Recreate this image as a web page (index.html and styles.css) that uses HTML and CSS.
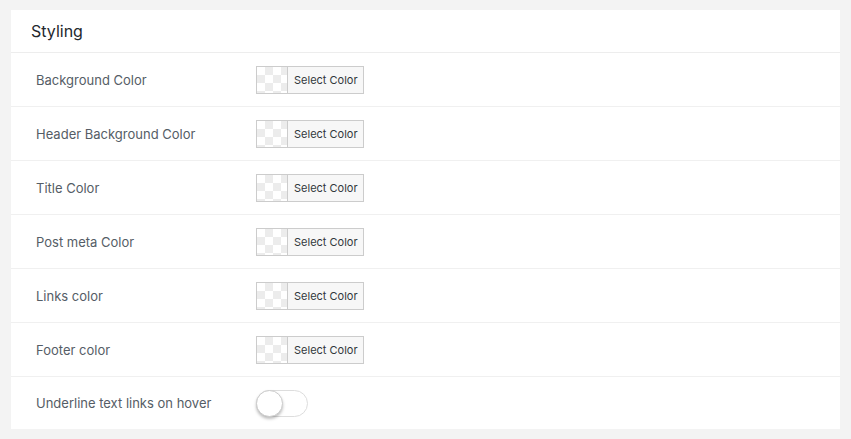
FILE: index.html
```html
<!DOCTYPE html>
<html lang="en">
<head>
    <meta charset="UTF-8">
    <title>Styling</title>
    <link rel="stylesheet" href="styles.css">
</head>
<body>
    <div class="panel">
        <div class="panel-title">Styling</div>
        <div class="row">
            <div class="label">Background Color</div>
            <div class="picker"><span class="swatch"></span><span class="pick-text">Select Color</span></div>
        </div>
        <div class="row">
            <div class="label">Header Background Color</div>
            <div class="picker"><span class="swatch"></span><span class="pick-text">Select Color</span></div>
        </div>
        <div class="row">
            <div class="label">Title Color</div>
            <div class="picker"><span class="swatch"></span><span class="pick-text">Select Color</span></div>
        </div>
        <div class="row">
            <div class="label">Post meta Color</div>
            <div class="picker"><span class="swatch"></span><span class="pick-text">Select Color</span></div>
        </div>
        <div class="row">
            <div class="label">Links color</div>
            <div class="picker"><span class="swatch"></span><span class="pick-text">Select Color</span></div>
        </div>
        <div class="row">
            <div class="label">Footer color</div>
            <div class="picker"><span class="swatch"></span><span class="pick-text">Select Color</span></div>
        </div>
        <div class="row">
            <div class="label">Underline text links on hover</div>
            <div class="toggle"><span class="knob"></span></div>
        </div>
    </div>
</body>
</html>
```

FILE: styles.css
```css
body {
    font-family: Inter, "Liberation Sans", Arial, sans-serif;
    margin: 0;
    padding: 10px 11px 11px;
    background-color: #f3f3f3;
}
.panel {
    background-color: #fff;
}
.panel-title {
    height: 42px;
    line-height: 42px;
    padding-left: 20px;
    font-size: 16px;
    color: #23282d;
    border-bottom: 1px solid #ededed;
}
.row {
    display: flex;
    align-items: center;
    height: 53px;
    padding-left: 25px;
    border-bottom: 1px solid #f0f0f0;
}
.row:last-child {
    height: 52px;
    border-bottom: none;
}
.label {
    width: 220px;
    font-size: 13px;
    color: #555d66;
}
.picker {
    display: flex;
    height: 26px;
    border: 1px solid #ccc;
    background-color: #f7f7f7;
}
.swatch {
    width: 30px;
    border-right: 1px solid #ccc;
    background-color: #fff;
    background-image:
        linear-gradient(45deg, #ececec 25%, transparent 25%, transparent 75%, #ececec 75%),
        linear-gradient(45deg, #ececec 25%, transparent 25%, transparent 75%, #ececec 75%);
    background-size: 16px 16px;
    background-position: 0 0, 8px 8px;
}
.pick-text {
    width: 75px;
    padding-left: 6px;
    box-sizing: border-box;
    line-height: 26px;
    font-size: 11px;
    color: #32373c;
}
.toggle {
    position: relative;
    width: 50px;
    height: 25px;
    border: 1px solid #ddd;
    border-radius: 14px;
    background-color: #fff;
}
.knob {
    position: absolute;
    left: -1px;
    top: -1px;
    width: 25px;
    height: 25px;
    border: 1px solid #ccc;
    border-radius: 50%;
    background-color: #fff;
    box-shadow: 0 2px 3px rgba(0, 0, 0, 0.25);
}
```
